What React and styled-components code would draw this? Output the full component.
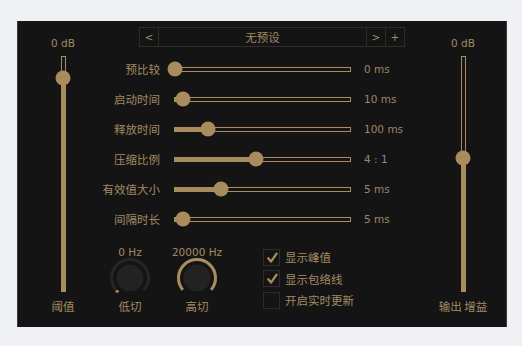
import React from "react";
import styled, { createGlobalStyle } from "styled-components";

const GOLD = "#a88c5e";
const TEXT = "#a38a62";
const FONT = `"DejaVu Sans", "Noto Sans CJK SC", sans-serif`;
const CJK = `"Noto Sans CJK SC", "DejaVu Sans", sans-serif`;

const Global = createGlobalStyle`
  html, body { margin: 0; padding: 0; background: #f0f1f5; }
  body { font-family: ${FONT}; }
`;

const Panel = styled.div`
  margin: 21px 0 0 17px;
  width: 490px;
  height: 306px;
  box-sizing: border-box;
  background: #141414;
  border-left: 1px solid #3a3a3a;
  border-right: 1px solid #3a3a3a;
  display: flex;
  align-items: flex-start;
  padding-left: 15px;
`;

const VColumn = styled.div`
  width: 60px;
  padding-top: 15px;
  display: flex;
  flex-direction: column;
  align-items: center;
  margin-right: ${(p) => (p.$left ? "4px" : "0")};
`;

const DbLabel = styled.div`
  font-family: ${FONT};
  font-size: 10.5px;
  line-height: 14px;
  height: 14px;
  color: ${TEXT};
  white-space: nowrap;
`;

const VTrack = styled.div`
  position: relative;
  width: 5px;
  height: 236px;
  box-sizing: border-box;
  border: 1px solid ${GOLD};
  margin-top: 6px;
`;

const VFill = styled.div`
  position: absolute;
  left: -1px;
  bottom: -1px;
  width: 5px;
  background: ${GOLD};
`;

const Thumb = styled.div`
  position: absolute;
  width: 15px;
  height: 15px;
  border-radius: 50%;
  background: ${GOLD};
`;

const VThumb = styled(Thumb)`
  left: 50%;
  transform: translate(-50%, -50%);
`;

const BottomLabel = styled.div`
  font-family: ${CJK};
  font-size: 11.5px;
  line-height: 14px;
  height: 14px;
  margin-top: 7px;
  color: ${TEXT};
  white-space: nowrap;
`;

const Center = styled.div`
  width: 336px;
  padding-top: 6px;
  display: flex;
  flex-direction: column;
`;

const PresetBar = styled.div`
  margin-left: 42px;
  width: 266px;
  height: 20px;
  box-sizing: border-box;
  border: 1px solid #2c2c2c;
  display: flex;
`;

const PresetCell = styled.div`
  width: ${(p) => (p.$grow ? "auto" : "18px")};
  flex: ${(p) => (p.$grow ? "1" : "none")};
  border-left: ${(p) => (p.$first ? "none" : "1px solid #2c2c2c")};
  display: flex;
  align-items: center;
  justify-content: center;
  font-family: ${(p) => (p.$grow ? CJK : FONT)};
  font-size: ${(p) => (p.$grow ? "11.5px" : "10.5px")};
  color: ${TEXT};
  line-height: 18px;
`;

const Rows = styled.div`
  margin-top: 7px;
  display: flex;
  flex-direction: column;
`;

const Row = styled.div`
  height: 30px;
  display: flex;
  align-items: center;
`;

const RowLabel = styled.div`
  width: 63px;
  margin-right: 14px;
  text-align: right;
  font-family: ${CJK};
  font-size: 11.5px;
  line-height: 14px;
  color: ${TEXT};
  white-space: nowrap;
`;

const HTrack = styled.div`
  position: relative;
  width: 177px;
  height: 5px;
  box-sizing: border-box;
  border: 1px solid ${GOLD};
`;

const HFill = styled.div`
  position: absolute;
  left: -1px;
  top: -1px;
  height: 5px;
  background: ${GOLD};
`;

const HThumb = styled(Thumb)`
  top: 50%;
  transform: translate(-50%, -50%);
`;

const RowValue = styled.div`
  margin-left: 13px;
  font-family: ${FONT};
  font-size: 10.5px;
  line-height: 14px;
  color: #9e8762;
  white-space: nowrap;
`;

const Bottom = styled.div`
  margin-top: 12px;
  display: flex;
  align-items: flex-start;
`;

const KnobGroup = styled.div`
  width: 60px;
  margin-left: ${(p) => p.$ml}px;
  display: flex;
  flex-direction: column;
  align-items: center;
`;

const KnobTop = styled.div`
  font-family: ${FONT};
  font-size: 10.5px;
  line-height: 13px;
  height: 13px;
  color: ${TEXT};
  white-space: nowrap;
`;

const KnobSvg = styled.svg`
  display: block;
  margin-top: -3px;
`;

const KnobLabel = styled.div`
  font-family: ${CJK};
  font-size: 11.5px;
  line-height: 14px;
  height: 14px;
  margin-top: -1.5px;
  color: ${TEXT};
`;

const Checks = styled.div`
  margin-left: 36px;
  padding-top: 2.5px;
  display: flex;
  flex-direction: column;
  gap: 4.5px;
`;

const CheckRow = styled.div`
  display: flex;
  align-items: center;
  height: 17px;
`;

const Box = styled.div`
  width: 17px;
  height: 17px;
  box-sizing: border-box;
  border: 1px solid #2c2c2c;
  display: flex;
  align-items: center;
  justify-content: center;
`;

const CheckText = styled.div`
  margin-left: 5px;
  font-family: ${CJK};
  font-size: 11.5px;
  line-height: 14px;
  color: ${TEXT};
  white-space: nowrap;
`;

function VSlider({ label, bottom, thumb, left }) {
  return (
    <VColumn $left={left}>
      <DbLabel>{label}</DbLabel>
      <VTrack>
        <VFill style={{ top: thumb }} />
        <VThumb style={{ top: thumb }} />
      </VTrack>
      <BottomLabel>{bottom}</BottomLabel>
    </VColumn>
  );
}

function HSlider({ label, pct, value }) {
  return (
    <Row>
      <RowLabel>{label}</RowLabel>
      <HTrack>
        <HFill style={{ width: `${pct}%` }} />
        <HThumb style={{ left: `${pct}%` }} />
      </HTrack>
      <RowValue>{value}</RowValue>
    </Row>
  );
}

function polar(cx, cy, r, deg) {
  const a = ((deg - 90) * Math.PI) / 180;
  return [cx + r * Math.cos(a), cy + r * Math.sin(a)];
}

function arc(cx, cy, r, a0, a1) {
  const [x0, y0] = polar(cx, cy, r, a0);
  const [x1, y1] = polar(cx, cy, r, a1);
  const large = a1 - a0 > 180 ? 1 : 0;
  return `M${x0} ${y0} A${r} ${r} 0 ${large} 1 ${x1} ${y1}`;
}

function Knob({ top, label, frac, ml }) {
  const A0 = -130;
  const A1 = 130;
  const end = A0 + (A1 - A0) * frac;
  const [dx, dy] = polar(22, 22, 18.5, -136);
  return (
    <KnobGroup $ml={ml}>
      <KnobTop>{top}</KnobTop>
      <KnobSvg width="44" height="44" viewBox="0 0 44 44">
        <path d={arc(22, 22, 18.5, A0, A1)} stroke="#262626" strokeWidth="3" fill="none" />
        {frac > 0 && (
          <path d={arc(22, 22, 18.5, A0, end)} stroke={GOLD} strokeWidth="3" fill="none" />
        )}
        {frac === 0 && <circle cx={dx} cy={dy} r="1.6" fill={GOLD} />}
        <circle cx="22" cy="22" r="13.5" fill="#222222" />
      </KnobSvg>
      <KnobLabel>{label}</KnobLabel>
    </KnobGroup>
  );
}

function Check({ checked, children }) {
  return (
    <CheckRow>
      <Box>
        {checked && (
          <svg width="15" height="15" viewBox="0 0 15 15">
            <path d="M4.3 8.3 L7 11.6 L12.6 3.6" stroke={GOLD} strokeWidth="2.3" fill="none" strokeLinecap="round" strokeLinejoin="round" />
          </svg>
        )}
      </Box>
      <CheckText>{children}</CheckText>
    </CheckRow>
  );
}

const rows = [
  { label: "预比较", pct: 0, value: "0 ms" },
  { label: "启动时间", pct: 4.5, value: "10 ms" },
  { label: "释放时间", pct: 19, value: "100 ms" },
  { label: "压缩比例", pct: 46.3, value: "4 : 1" },
  { label: "有效值大小", pct: 26, value: "5 ms" },
  { label: "间隔时长", pct: 4.5, value: "5 ms" },
];

export default function App() {
  return (
    <>
      <Global />
      <Panel>
        <VSlider label="0 dB" bottom="阈值" thumb={21} left />
        <Center>
          <PresetBar>
            <PresetCell $first>&lt;</PresetCell>
            <PresetCell $grow>无预设</PresetCell>
            <PresetCell>&gt;</PresetCell>
            <PresetCell>+</PresetCell>
          </PresetBar>
          <Rows>
            {rows.map((r) => (
              <HSlider key={r.label} {...r} />
            ))}
          </Rows>
          <Bottom>
            <Knob top="0 Hz" label="低切" frac={0} ml={3} />
            <Knob top="20000 Hz" label="高切" frac={1} ml={7} />
            <Checks>
              <Check checked>显示峰值</Check>
              <Check checked>显示包络线</Check>
              <Check>开启实时更新</Check>
            </Checks>
          </Bottom>
        </Center>
        <VSlider label="0 dB" bottom="输出 增益" thumb={101} />
      </Panel>
    </>
  );
}
